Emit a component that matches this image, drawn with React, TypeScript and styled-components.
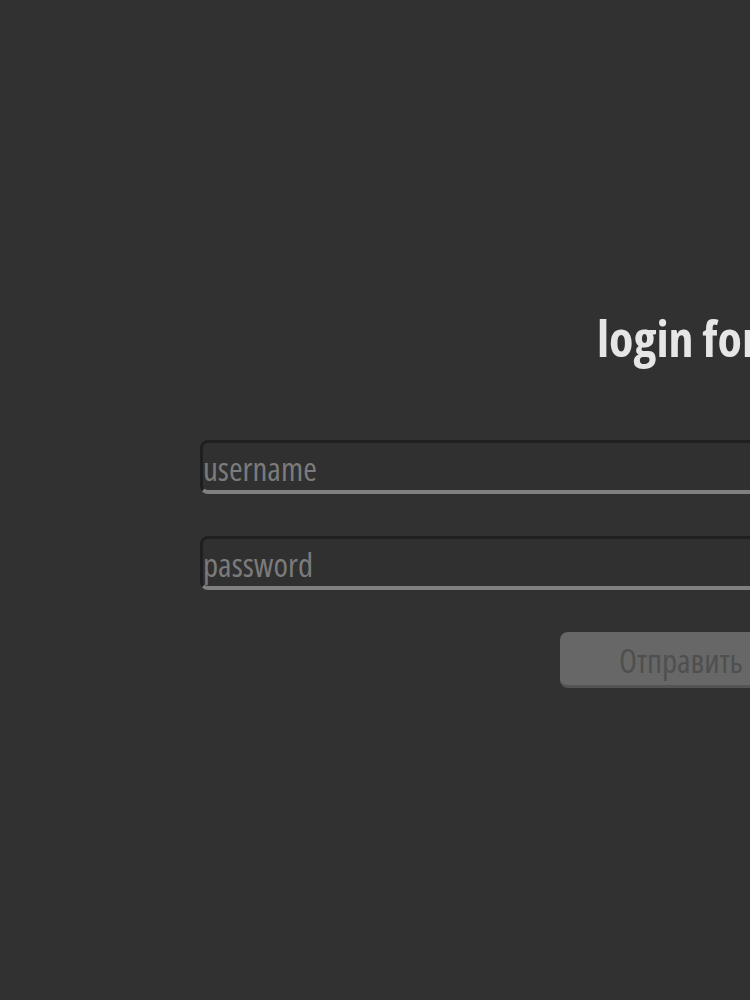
import React from "react";
import styled, { createGlobalStyle } from "styled-components";

const Global = createGlobalStyle`
  html, body { margin: 0; padding: 0; background: #313131; overflow: hidden; }
  body { font-family: "Open Sans", "Roboto", sans-serif; font-stretch: condensed; }
`;

const Page = styled.div`
  width: 1214px;
  min-height: 1000px;
  padding: 313px 0 0 200px;
  box-sizing: border-box;
`;

const Title = styled.h1`
  margin: 0 0 77px 397px;
  font-size: 50px;
  line-height: 50px;
  font-weight: 700;
  font-stretch: condensed;
  color: #e6e6e6;
`;

const Form = styled.form`
  display: flex;
  flex-direction: column;
  gap: 42px;
  width: 1014px;
`;

const Input = styled.input`
  height: 54px;
  box-sizing: border-box;
  border: 3px solid #1f1f1f;
  border-bottom: 4px solid #808080;
  border-radius: 8px;
  background: #303030;
  padding: 3px 0 0 0;
  font-family: inherit;
  font-stretch: condensed;
  font-size: 33px;
  color: #d0d0d0;
  outline: none;
  &::placeholder { color: #7b7b7b; }
`;

const Row = styled.div`
  display: flex;
  padding-left: 360px;
`;

const Button = styled.button`
  height: 56px;
  width: 300px;
  box-sizing: border-box;
  background: #676767;
  border: none;
  border-bottom: 3px solid #545454;
  border-radius: 8px;
  color: #4f4f4f;
  font-family: inherit;
  font-stretch: condensed;
  font-size: 33px;
  text-align: left;
  padding: 3px 0 0 59px;
`;

export default function App() {
  return (
    <>
      <Global />
      <Page>
        <Title>login form</Title>
        <Form onSubmit={(e) => e.preventDefault()}>
          <Input placeholder="username" />
          <Input type="password" placeholder="password" />
          <Row>
            <Button type="submit">Отправить</Button>
          </Row>
        </Form>
      </Page>
    </>
  );
}
